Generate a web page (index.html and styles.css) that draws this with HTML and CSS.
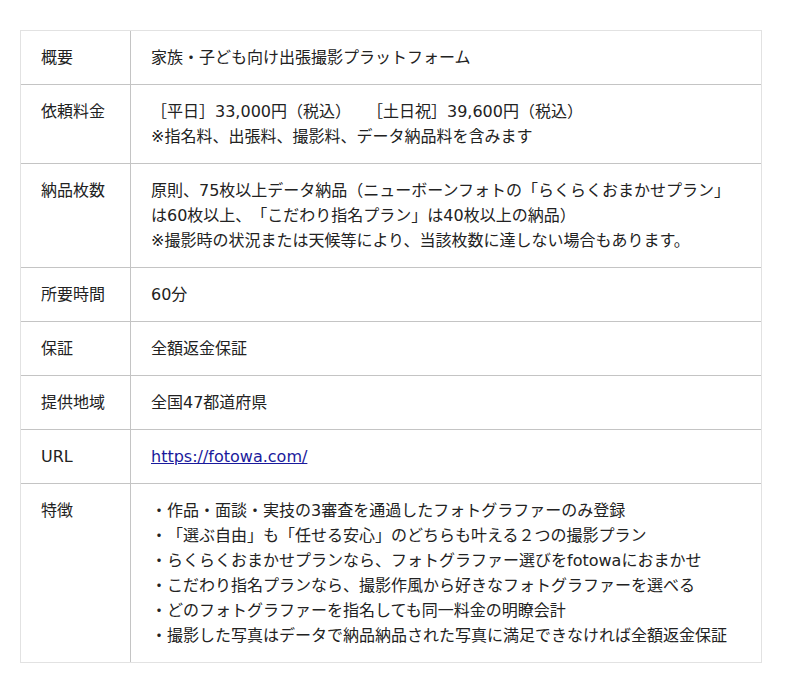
FILE: index.html
```html
<!DOCTYPE html>
<html lang="ja">
<head>
  <meta charset="UTF-8" />
  <title>fotowa</title>
  <link rel="stylesheet" href="styles.css">
</head>
<body>
  <table class="spec">
    <tbody>
      <tr>
        <th>概要</th>
        <td>家族・子ども向け出張撮影プラットフォーム</td>
      </tr>
      <tr>
        <th>依頼料金</th>
        <td>［平日］33,000円（税込）　［土日祝］39,600円（税込）<br>※指名料、出張料、撮影料、データ納品料を含みます</td>
      </tr>
      <tr>
        <th>納品枚数</th>
        <td>原則、75枚以上データ納品（ニューボーンフォトの「らくらくおまかせプラン」は60枚以上、「こだわり指名プラン」は40枚以上の納品）<br>※撮影時の状況または天候等により、当該枚数に達しない場合もあります。</td>
      </tr>
      <tr>
        <th>所要時間</th>
        <td>60分</td>
      </tr>
      <tr>
        <th>保証</th>
        <td>全額返金保証</td>
      </tr>
      <tr>
        <th>提供地域</th>
        <td>全国47都道府県</td>
      </tr>
      <tr>
        <th>URL</th>
        <td><a href="https://fotowa.com/">https://fotowa.com/</a></td>
      </tr>
      <tr>
        <th>特徴</th>
        <td>
          <ul class="features">
            <li>・作品・面談・実技の3審査を通過したフォトグラファーのみ登録</li>
            <li>・「選ぶ自由」も「任せる安心」のどちらも叶える２つの撮影プラン</li>
            <li>・らくらくおまかせプランなら、フォトグラファー選びをfotowaにおまかせ</li>
            <li>・こだわり指名プランなら、撮影作風から好きなフォトグラファーを選べる</li>
            <li>・どのフォトグラファーを指名しても同一料金の明瞭会計</li>
            <li>・撮影した写真はデータで納品納品された写真に満足できなければ全額返金保証</li>
          </ul>
        </td>
      </tr>
    </tbody>
  </table>
</body>
</html>
```

FILE: styles.css
```css
:root {
  --text: #222;
  --line: #c4c4c4;
  --frame: #e2e2e2;
  --link: #1a1a9c;
}

* {
  margin: 0;
  padding: 0;
  box-sizing: border-box;
}

body {
  background: #ffffff;
  color: var(--text);
  font-family: 'DejaVu Sans', 'Noto Sans CJK JP', sans-serif;
  font-size: 16px;
  line-height: 25px;
  /* 約物を詰めない */
  text-spacing-trim: space-all;
}

.spec {
  width: 742px;
  margin: 30px 20px;
  table-layout: fixed;
  border-collapse: separate;
  border-spacing: 0;
  border: 1px solid var(--frame);
}

.spec th,
.spec td {
  padding: 14px 20px;
  text-align: left;
  vertical-align: top;
  font-weight: normal;
}

.spec th {
  width: 110px;
  border-right: 1px solid var(--line);
}

/* 最終行以外に区切り線 */
.spec tr:not(:last-child) th,
.spec tr:not(:last-child) td {
  border-bottom: 1px solid var(--line);
}

.spec a {
  color: var(--link);
  text-decoration: underline;
}

.features {
  list-style: none;
}
```
